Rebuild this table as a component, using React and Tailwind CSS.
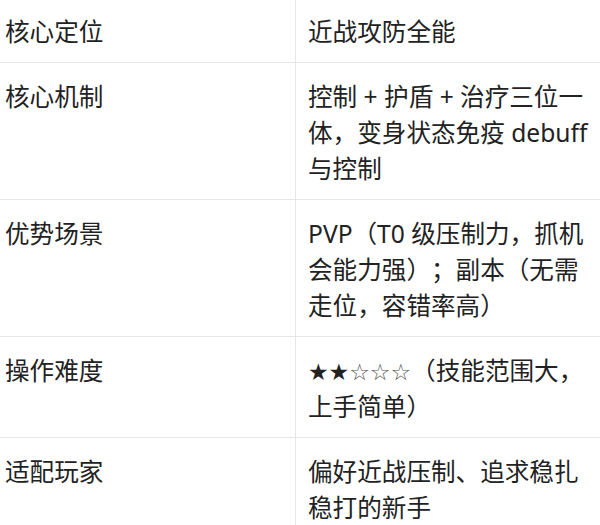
import React from "react";

const rows = [
  { k: "核心定位", v: "近战攻防全能" },
  { k: "核心机制", v: "控制 + 护盾 + 治疗三位一体，变身状态免疫 debuff 与控制" },
  { k: "优势场景", v: "PVP（T0 级压制力，抓机会能力强）；副本（无需走位，容错率高）" },
  {
    k: "操作难度",
    v: (
      <>
        <span className="font-['DejaVu_Sans'] text-[23px] leading-none">
          ★★<span className="text-[#555]">☆☆☆</span>
        </span>
        （技能范围大，上手简单）
      </>
    ),
  },
  { k: "适配玩家", v: "偏好近战压制、追求稳扎稳打的新手" },
];

export default function App() {
  return (
    <div className="w-[600px] h-[525px] overflow-hidden bg-white">
      <div className="-mt-[2px] font-['Noto_Sans','Noto_Sans_CJK_SC',sans-serif] text-[24.6px] leading-[36px] text-[#222] [text-spacing-trim:space-all]">
        {rows.map((r, i) => (
          <div
            key={i}
            className="grid grid-cols-[296px_1fr] border-b border-[#e6e6e6]"
          >
            <div className="border-r border-[#e6e6e6] pl-[5px] pr-3 pt-4 pb-3">
              {r.k}
            </div>
            <div className="pl-3 pr-3 pt-4 pb-3">{r.v}</div>
          </div>
        ))}
      </div>
    </div>
  );
}
